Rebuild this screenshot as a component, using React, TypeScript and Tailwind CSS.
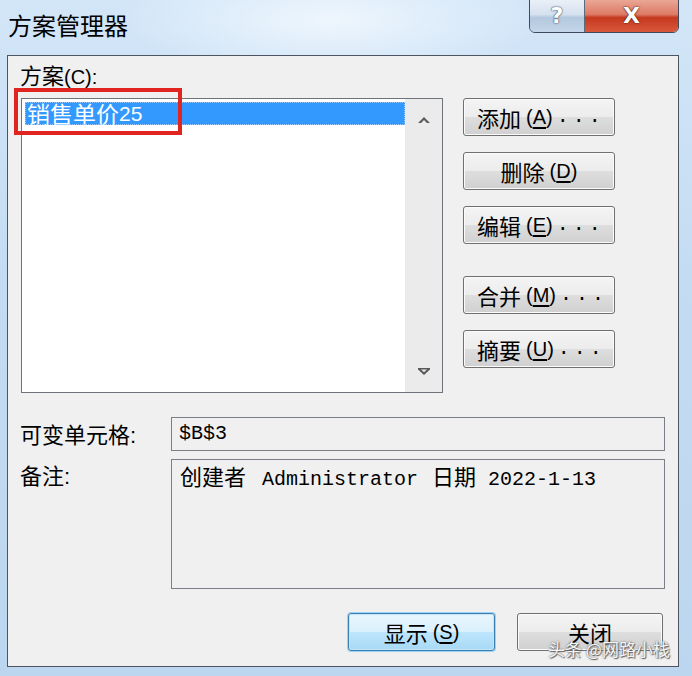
import React from "react";

const CJK = '"Noto Sans CJK SC", "Noto Sans CJK JP", sans-serif';

function Btn({ children, className = "", primary = false }: { children: React.ReactNode; className?: string; primary?: boolean }) {
  return (
    <div
      className={
        "h-[38px] rounded-[3px] flex items-center whitespace-nowrap text-[22px] leading-none text-black " +
        (primary
          ? "border border-[#3c7fb1] shadow-[inset_0_0_0_1px_#c4e5f6,0_0_0_1px_#9bd3f3] bg-[linear-gradient(to_bottom,#eaf6fd_0%,#d9f0fc_50%,#bee6fd_50%,#a7d9f5_100%)] "
          : "border border-[#707070] shadow-[inset_0_0_0_1px_#fbfbfb] bg-[linear-gradient(to_bottom,#f4f4f4_0%,#ececec_50%,#dedede_50%,#d0d0d0_100%)] ") +
        className
      }
    >
      {children}
    </div>
  );
}

function Mn({ ch }: { ch: string }) {
  return (
    <span className="ml-[5px] text-[20px]" style={{ fontFamily: '"Liberation Sans", sans-serif' }}>
      (<span className="underline underline-offset-[3px]">{ch}</span>)
    </span>
  );
}

function Dots() {
  return <span className="ml-[4px] tracking-[4px] text-[20px]" style={{ fontFamily: '"Liberation Mono", monospace' }}>...</span>;
}

const MONO = { fontFamily: '"Liberation Mono", monospace' };

export default function App() {
  return (
    <div
      className="relative w-[692px] h-[676px] overflow-hidden flex flex-col bg-[linear-gradient(to_bottom,#d3e6f8_0%,#c4dcf2_40%,#bcd6ef_100%)]"
      style={{ fontFamily: CJK }}
    >
      <div className="absolute left-[120px] top-[-40px] w-[420px] h-[120px] rounded-full bg-[radial-gradient(ellipse_at_center,#eef6fd_0%,rgba(238,246,253,0)_70%)]" />
      {/* title bar */}
      <div className="relative h-[55px] flex items-start">
        <div className="ml-[8px] mt-[10px] text-[24px] leading-[30px] text-black">方案管理器</div>
        <div className="ml-auto mr-[13px] flex h-[34px] mt-[-1px] rounded-b-[6px] border border-[#3d4a5c] overflow-hidden">
          <div className="w-[55px] h-full flex items-center justify-center border-r border-[#5a6b80] bg-[linear-gradient(to_bottom,#e9f0f7_0%,#d5e1ee_45%,#b3c8de_55%,#c3d6ea_100%)]">
            <span className="text-[22px] font-bold text-white leading-none [text-shadow:0_0_2px_#3a4756,0_0_1px_#3a4756]" style={{ fontFamily: '"DejaVu Sans", sans-serif' }}>?</span>
          </div>
          <div className="w-[93px] h-full flex items-center justify-center bg-[linear-gradient(to_bottom,#eaa695_0%,#dd7b66_45%,#c6391f_55%,#d8583c_100%)]">
            <span className="text-[22px] font-bold text-white leading-none [text-shadow:0_0_2px_#4a1a10,0_0_1px_#4a1a10]" style={{ fontFamily: '"DejaVu Sans", sans-serif' }}>X</span>
          </div>
        </div>
      </div>

      {/* content panel */}
      <div className="relative ml-[7px] w-[672px] h-[612px] border border-[#4d5560] bg-[#f0f0f0] flex flex-col">
        <div className="ml-[12px] mt-[6px] h-[24px] text-[22px] leading-[24px] text-black">
          方案<span className="text-[20px]" style={{ fontFamily: '"Liberation Sans", sans-serif' }}>(C):</span>
        </div>
        <div className="flex mt-[12px] ml-[13px]">
          {/* listbox */}
          <div className="w-[422px] h-[295px] border border-[#6f747a] bg-white flex">
            <div className="flex-1 pt-[3px] pl-[3px]">
              <div className="h-[23px] bg-[#3399ff] outline-dotted outline-1 outline-[#9cc9f7] -outline-offset-1 flex items-center pl-[2px] text-white text-[23px] leading-none">
                销售单价<span className="text-[21px]" style={{ fontFamily: '"Liberation Sans", sans-serif' }}>25</span>
              </div>
            </div>
            <div className="w-[37px] h-full bg-[#ebebeb] flex flex-col items-center justify-between py-[17px]">
              <svg width="12" height="7" viewBox="0 0 12 7"><path d="M0 7 L6 1 L12 7 L9 7 L6 4 L3 7 Z" fill="#5a5a5a" /></svg>
              <svg width="12" height="7" viewBox="0 0 12 7"><path d="M0 0 L12 0 L12 1.5 L6 7 L0 1.5 Z M3 1.5 L6 4.2 L9 1.5 Z" fill="#5a5a5a" fillRule="evenodd" /></svg>
            </div>
          </div>
          {/* buttons */}
          <div className="ml-[20px] w-[152px] flex flex-col">
            <Btn className="pl-[13px]">添加<Mn ch="A" /><Dots /></Btn>
            <Btn className="mt-[16px] justify-center">删除<Mn ch="D" /></Btn>
            <Btn className="mt-[16px] pl-[13px]">编辑<Mn ch="E" /><Dots /></Btn>
            <Btn className="mt-[32px] pl-[13px]">合并<Mn ch="M" /><Dots /></Btn>
            <Btn className="mt-[16px] pl-[13px]">摘要<Mn ch="U" /><Dots /></Btn>
          </div>
        </div>

        <div className="flex items-center mt-[24px] ml-[12px]">
          <div className="w-[151px] text-[22px] leading-none text-black">可变单元格<span style={{ fontFamily: '"Liberation Sans", sans-serif' }}>:</span></div>
          <div className="w-[494px] h-[34px] border border-[#7a7f86] bg-[#f0f0f0] flex items-center pl-[7px] text-[20px] text-black" style={MONO}>
            $B$3
          </div>
        </div>
        <div className="flex items-start mt-[8px] ml-[12px]">
          <div className="w-[151px] pt-[3px] text-[22px] leading-[24px] text-black">备注<span style={{ fontFamily: '"Liberation Sans", sans-serif' }}>:</span></div>
          <div className="w-[494px] h-[130px] border border-[#7a7f86] bg-[#f0f0f0] pl-[8px] pt-[2px] text-[22px] leading-[26px] text-black whitespace-nowrap">
            创建者<span className="ml-[16px] text-[20px]" style={MONO}>Administrator</span><span className="ml-[14px]">日期</span><span className="ml-[12px] text-[20px]" style={MONO}>2022-1-13</span>
          </div>
        </div>

        <div className="flex justify-end mt-[24px] mr-[15px] gap-[22px]">
          <Btn primary className="w-[147px] justify-center">显示<Mn ch="S" /></Btn>
          <Btn className="w-[146px] justify-center">关闭</Btn>
        </div>
      </div>

      {/* red highlight */}
      <div className="absolute left-[14px] top-[88px] w-[168px] h-[47px] border-[4px] border-[#e0241f]" />
      {/* watermark */}
      <div className="absolute left-[548px] top-[640px] text-[17px] leading-none whitespace-nowrap text-[#f4f4f4] [text-shadow:0_0_2px_#555,1px_1px_1px_#666]">
        头条 @网路小栈
      </div>
    </div>
  );
}
